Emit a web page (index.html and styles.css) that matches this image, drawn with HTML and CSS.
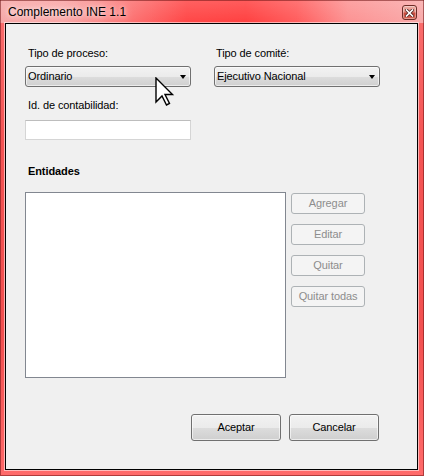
FILE: index.html
```html
<!DOCTYPE html>
<html lang="es">

<head>
    <meta charset="UTF-8">
    <title>Complemento INE 1.1</title>
    <link rel="stylesheet" href="styles.css">
</head>

<body>
    <div class="window">
        <!-- Title bar -->
        <div class="titlebar">
            <span class="title">Complemento INE 1.1</span>
            <span class="close-btn">
                <svg width="9" height="8" viewBox="0 0 9 8">
                    <path d="M1.5 1 L7.5 7 M7.5 1 L1.5 7" stroke="#5a2a26" stroke-width="3.2" stroke-linecap="square" />
                    <path d="M1.5 1 L7.5 7 M7.5 1 L1.5 7" stroke="#fff" stroke-width="1.6" stroke-linecap="square" />
                </svg>
            </span>
        </div>

        <!-- Client area -->
        <div class="client">
            <div class="top-fields">
                <div class="field">
                    <label class="field-label">Tipo de proceso:</label>
                    <div class="combo">
                        <span>Ordinario</span>
                        <span class="combo-arrow"></span>
                    </div>
                </div>
                <div class="field">
                    <label class="field-label field-label-tight">Tipo de comité:</label>
                    <div class="combo">
                        <span>Ejecutivo Nacional</span>
                        <span class="combo-arrow"></span>
                    </div>
                </div>
            </div>

            <div class="field id-field">
                <label class="field-label">Id. de contabilidad:</label>
                <div class="textbox"></div>
            </div>

            <div class="section-title">Entidades</div>

            <div class="entities">
                <div class="listbox"></div>
                <div class="side-buttons">
                    <button class="btn btn-small" disabled>Agregar</button>
                    <button class="btn btn-small" disabled>Editar</button>
                    <button class="btn btn-small" disabled>Quitar</button>
                    <button class="btn btn-small" disabled>Quitar todas</button>
                </div>
            </div>

            <div class="footer">
                <button class="btn btn-large">Aceptar</button>
                <button class="btn btn-large">Cancelar</button>
            </div>
        </div>

        <!-- Mouse pointer -->
        <svg class="cursor" width="20" height="30" viewBox="0 0 20 30">
            <path d="M1 1 L1 25 L7 19 L11.5 28 L14.5 26.5 L10 17.5 L17.5 17.5 Z" fill="#fff" stroke="#000" stroke-width="1.4" stroke-linejoin="miter" />
        </svg>
    </div>
</body>

</html>
```

FILE: styles.css
```css
body {
    margin: 0;
    padding: 0;
    background: #f46060;
    font-family: "Liberation Sans", Arial, sans-serif;
}

.window {
    position: relative;
    width: 424px;
    height: 476px;
    box-sizing: border-box;
    display: flex;
    flex-direction: column;
    background: linear-gradient(180deg, #fb7070 0%, #f45454 30%, #f25050 70%, #ff6a6a 100%);
    box-shadow: inset 0 0 0 1px rgba(110, 20, 20, 0.55);
}

/* Title bar */
.titlebar {
    height: 23px;
    box-sizing: border-box;
    padding: 5px 7px 0 8px;
    display: flex;
    justify-content: space-between;
    align-items: flex-start;
    background:
        linear-gradient(180deg, rgba(255, 255, 255, 0.15) 0%, rgba(255, 255, 255, 0) 100%),
        linear-gradient(90deg, #f6a6a6 0%, #f9a4a4 15%, #fc7474 30%, #ff4646 44%, #ff4040 58%, #ff5c5c 70%, #fc9292 82%, #f9aaaa 100%);
    box-shadow: inset 0 1px 0 rgba(110, 20, 20, 0.55), inset 1px 0 0 rgba(110, 20, 20, 0.55), inset -1px 0 0 rgba(110, 20, 20, 0.55);
}

.title {
    font-size: 12px;
    line-height: 15px;
    color: #000;
    text-shadow: 0 0 8px rgba(255, 255, 255, 0.9), 0 0 4px rgba(255, 255, 255, 0.8);
}

.close-btn {
    width: 15px;
    height: 15px;
    box-sizing: border-box;
    border: 1px solid #6e2c27;
    border-radius: 3px;
    display: flex;
    align-items: center;
    justify-content: center;
    background: linear-gradient(180deg, #eeb0a8 0%, #e39186 45%, #c9483b 55%, #d86656 100%);
    box-shadow: inset 0 0 0 1px rgba(255, 255, 255, 0.35);
}

.close-btn svg {
    display: block;
}

/* Client area */
.client {
    flex: 1;
    margin: 0 6px 6px 5px;
    border: 1px solid #000;
    background: #f0f0f0;
    padding: 23px 0 0 19px;
    box-shadow: 0 0 0 1px rgba(255, 255, 255, 0.55);
    font-size: 11px;
    letter-spacing: -0.1px;
    color: #000;
}

.top-fields {
    display: grid;
    grid-template-columns: 166px 166px;
    column-gap: 23px;
}

.field {
    display: flex;
    flex-direction: column;
}

.field-label {
    line-height: 13px;
    padding-left: 3px;
    margin-bottom: 6px;
}

.field-label-tight {
    padding-left: 2px;
}

.combo {
    height: 21px;
    box-sizing: border-box;
    border: 1px solid #707070;
    border-radius: 3px;
    display: flex;
    align-items: center;
    justify-content: space-between;
    padding: 0 4px 0 2px;
    line-height: 13px;
    background: linear-gradient(180deg, #f2f2f2 0%, #ebebeb 50%, #dddddd 50%, #cfcfcf 100%);
    box-shadow: inset 0 0 0 1px rgba(255, 255, 255, 0.6);
}

.combo-arrow {
    width: 0;
    height: 0;
    border-left: 3.5px solid transparent;
    border-right: 3.5px solid transparent;
    border-top: 4px solid #000;
    margin-top: 1px;
}

.id-field {
    width: 166px;
    margin-top: 12px;
}

.id-field .field-label {
    margin-bottom: 8px;
}

.textbox {
    height: 20px;
    box-sizing: border-box;
    background: #fff;
    border: 1px solid #d5d5d5;
    border-top-color: #bdbdbd;
}

.section-title {
    font-weight: bold;
    line-height: 13px;
    padding-left: 3px;
    margin-top: 25px;
}

.entities {
    display: flex;
    gap: 5px;
    margin-top: 14px;
}

.listbox {
    width: 261px;
    height: 186px;
    box-sizing: border-box;
    background: #fff;
    border: 1px solid #828790;
}

.side-buttons {
    display: flex;
    flex-direction: column;
    gap: 10px;
    padding-top: 1px;
}

.btn {
    box-sizing: border-box;
    font-family: "Liberation Sans", Arial, sans-serif;
    font-size: 11px;
    letter-spacing: -0.1px;
    line-height: 13px;
    padding: 0;
    color: #000;
    border: 1px solid #707070;
    border-radius: 3px;
    background: linear-gradient(180deg, #f2f2f2 0%, #ebebeb 50%, #dddddd 50%, #cfcfcf 100%);
    box-shadow: inset 0 0 0 1px rgba(255, 255, 255, 0.6);
}

.btn:disabled {
    color: #8d8d8d;
    border-color: #adb2b5;
    background: #f4f4f4;
    box-shadow: none;
}

.btn-small {
    width: 74px;
    height: 21px;
}

.btn-large {
    width: 90px;
    height: 27px;
}

.footer {
    display: flex;
    justify-content: flex-end;
    gap: 8px;
    margin-top: 36px;
    margin-right: 38px;
}

.cursor {
    position: absolute;
    left: 155px;
    top: 77px;
}
```
